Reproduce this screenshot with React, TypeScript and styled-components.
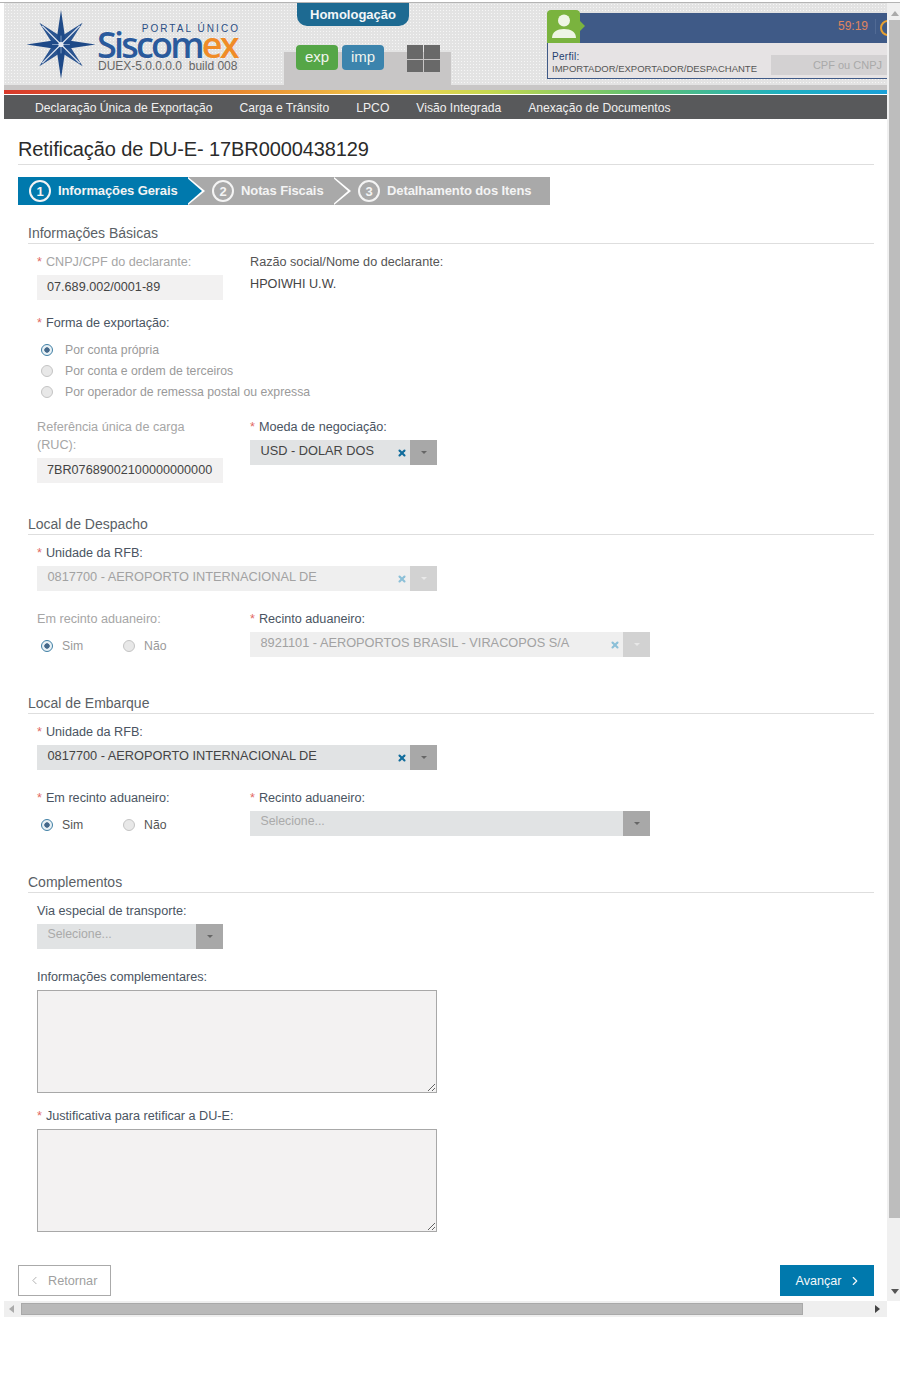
import { ChevronLeft, ChevronRight, X } from "lucide-react";
import styled, { createGlobalStyle } from "styled-components";

const GlobalStyle = createGlobalStyle`
  html, body {
    margin: 0;
    background: #fff;
    font-family: "Liberation Sans", Arial, sans-serif;
    color: #444;
  }
`;

const Star = () => (
  <StarSvg viewBox="0 0 70 70">
    <polygon points="13,13 35,27 57,13 43,35 57,57 35,43 13,57 27,35" fill="#2a5490" />
    <polygon points="35,0 39.5,30.5 70,35 39.5,39.5 35,70 30.5,39.5 0,35 30.5,30.5" fill="#1f4a88" />
    <path d="M35 35L16 16M35 35L54 16M35 35L54 54M35 35L16 54" stroke="#e4e9f2" strokeWidth="1.1" />
    <path d="M35 26V44M26 35H44" stroke="#9db2d2" strokeWidth="0.8" />
    <circle cx="35" cy="35" r="2.6" fill="#e4e9f2" />
  </StarSvg>
);

const Req = () => <Asterisk>*</Asterisk>;

type SelectProps = { value?: string; width: number; disabled?: boolean };

const Select = ({ value, width, disabled }: SelectProps) => (
  <SelectBox $width={width} $disabled={disabled}>
    <SelectValue $placeholder={!value} $disabled={disabled}>
      {value ?? "Selecione..."}
    </SelectValue>
    {value && (
      <ClearIcon $disabled={disabled}>
        <X size={10} strokeWidth={5} />
      </ClearIcon>
    )}
    <SelectArrow $disabled={disabled}>
      <Caret $disabled={disabled} />
    </SelectArrow>
  </SelectBox>
);

type RadioProps = { label: string; checked?: boolean; disabled?: boolean; inline?: boolean };

const Radio = ({ label, checked, disabled, inline }: RadioProps) => (
  <RadioItem $disabled={disabled}>
    <RadioDot $checked={checked} $inline={inline} />
    {label}
  </RadioItem>
);

const App = () => {
  return (
    <>
      <GlobalStyle />
      <Frame>
        <Viewport>
          <Main>
            <Header>
              <LogoArea>
                <Star />
                <Brand>
                  <PortalText>PORTAL ÚNICO</PortalText>
                  <BrandName>
                    Siscom<em>ex</em>
                  </BrandName>
                  <BuildText>DUEX-5.0.0.0.0&nbsp; build 008</BuildText>
                </Brand>
              </LogoArea>
              <ModuleColumn>
                <EnvTab>Homologação</EnvTab>
                <ModuleRow>
                  <ModuleButton $color="#55a647">exp</ModuleButton>
                  <ModuleButton $color="#3c84ad">imp</ModuleButton>
                  <AppsGrid>
                    <i />
                    <i />
                    <i />
                    <i />
                  </AppsGrid>
                </ModuleRow>
              </ModuleColumn>
              <Profile>
                <UserBadge>
                  <svg width="26" height="24" viewBox="0 0 26 24">
                    <circle cx="13" cy="6.5" r="6" fill="#eef5e4" />
                    <path d="M1 24c0-6 5-9 12-9s12 3 12 9z" fill="#eef5e4" />
                  </svg>
                </UserBadge>
                <ProfileBar>
                  <Timer>59:19</Timer>
                  <TimerDivider />
                  <TimerRing />
                </ProfileBar>
                <ProfileBody>
                  <ProfileInfo>
                    <ProfileLabel>Perfil:</ProfileLabel>
                    <ProfileValue>IMPORTADOR/EXPORTADOR/DESPACHANTE</ProfileValue>
                  </ProfileInfo>
                  <CpfBox>CPF ou CNPJ</CpfBox>
                </ProfileBody>
              </Profile>
            </Header>
            <GrayBand />
            <ColorStrip />
            <Nav>
              <span>Declaração Única de Exportação</span>
              <span>Carga e Trânsito</span>
              <span>LPCO</span>
              <span>Visão Integrada</span>
              <span>Anexação de Documentos</span>
            </Nav>

            <Content>
              <PageTitle>Retificação de DU-E- 17BR0000438129</PageTitle>
              <Steps>
                <Step $active $width={170} $z={3}>
                  <StepNumber>1</StepNumber>Informações Gerais
                </Step>
                <Step $width={146} $z={2} $pad={24}>
                  <StepNumber>2</StepNumber>Notas Fiscais
                </Step>
                <Step $width={216} $z={1} $pad={24} $last>
                  <StepNumber>3</StepNumber>Detalhamento dos Itens
                </Step>
              </Steps>

              <SectionTitle $top={18}>Informações Básicas</SectionTitle>
              <Fields>
                <Row $top={8}>
                  <Col>
                    <Label $muted>
                      <Req />
                      CNPJ/CPF do declarante:
                    </Label>
                    <ReadOnlyInput>07.689.002/0001-89</ReadOnlyInput>
                  </Col>
                  <Col>
                    <Label $tone="soft">Razão social/Nome do declarante:</Label>
                    <StaticValue>HPOIWHI U.W.</StaticValue>
                  </Col>
                </Row>
                <Label $top={13}>
                  <Req />
                  Forma de exportação:
                </Label>
                <RadioStack>
                  <Radio label="Por conta própria" checked disabled />
                  <Radio label="Por conta e ordem de terceiros" disabled />
                  <Radio label="Por operador de remessa postal ou expressa" disabled />
                </RadioStack>
                <Row $top={15}>
                  <Col>
                    <Label $muted>
                      Referência única de carga
                      <br />
                      (RUC):
                    </Label>
                    <ReadOnlyInput $top={8}>7BR07689002100000000000</ReadOnlyInput>
                  </Col>
                  <Col>
                    <Label>
                      <Req />
                      Moeda de negociação:
                    </Label>
                    <Select value="USD - DOLAR DOS" width={187} />
                  </Col>
                </Row>
              </Fields>

              <SectionTitle $top={31}>Local de Despacho</SectionTitle>
              <Fields>
                <Label $top={8}>
                  <Req />
                  Unidade da RFB:
                </Label>
                <Select value="0817700 - AEROPORTO INTERNACIONAL DE" width={400} disabled />
                <Row $top={18}>
                  <Col>
                    <Label $muted>Em recinto aduaneiro:</Label>
                    <RadioRow>
                      <Radio label="Sim" checked disabled inline />
                      <Radio label="Não" disabled inline />
                    </RadioRow>
                  </Col>
                  <Col>
                    <Label>
                      <Req />
                      Recinto aduaneiro:
                    </Label>
                    <Select value="8921101 - AEROPORTOS BRASIL - VIRACOPOS S/A" width={400} disabled />
                  </Col>
                </Row>
              </Fields>

              <SectionTitle $top={36}>Local de Embarque</SectionTitle>
              <Fields>
                <Label $top={8}>
                  <Req />
                  Unidade da RFB:
                </Label>
                <Select value="0817700 - AEROPORTO INTERNACIONAL DE" width={400} />
                <Row $top={18}>
                  <Col>
                    <Label>
                      <Req />
                      Em recinto aduaneiro:
                    </Label>
                    <RadioRow>
                      <Radio label="Sim" checked inline />
                      <Radio label="Não" inline />
                    </RadioRow>
                  </Col>
                  <Col>
                    <Label>
                      <Req />
                      Recinto aduaneiro:
                    </Label>
                    <Select width={400} />
                  </Col>
                </Row>
              </Fields>

              <SectionTitle $top={36}>Complementos</SectionTitle>
              <Fields>
                <Label $top={8}>Via especial de transporte:</Label>
                <Select width={186} />
                <Label $top={18}>Informações complementares:</Label>
                <TextArea readOnly />
                <Label $top={13}>
                  <Req />
                  Justificativa para retificar a DU-E:
                </Label>
                <TextArea readOnly />
              </Fields>

              <Footer>
                <BackButton>
                  <ChevronLeft size={13} strokeWidth={1.5} />
                  Retornar
                </BackButton>
                <NextButton>
                  Avançar
                  <ChevronRight size={14} strokeWidth={2} />
                </NextButton>
              </Footer>
            </Content>
          </Main>
          <VScroll>
            <VThumb />
            <VArrowDown />
          </VScroll>
        </Viewport>
        <HScroll>
          <HArrow $dir="left" />
          <HThumb />
          <HArrow $dir="right" />
        </HScroll>
      </Frame>
    </>
  );
};
export default App;

const Frame = styled.div`
  width: 896px;
  padding: 2px 0 0 4px;
  height: 1398px;
  box-sizing: content-box;
`;

const Viewport = styled.div`
  display: flex;
  border-top: 1px solid #b4b4b4;
  margin-left: -4px;
  padding-left: 4px;
`;

const Main = styled.div`
  width: 883px;
  flex: none;
`;

const Header = styled.div`
  height: 82px;
  display: flex;
  background-color: #e3e3e3;
  background-image: radial-gradient(#f6f6f6 0.8px, transparent 0.9px);
  background-size: 3px 3px;
`;

const LogoArea = styled.div`
  width: 280px;
  flex: none;
  display: flex;
  align-items: flex-start;
  padding: 7px 0 0 22px;
  box-sizing: border-box;
`;

const StarSvg = styled.svg`
  width: 70px;
  height: 69px;
  flex: none;
`;

const Brand = styled.div`
  margin: 13px 0 0 1px;
  width: 146px;
`;

const PortalText = styled.div`
  font-size: 10px;
  line-height: 11px;
  letter-spacing: 2.05px;
  color: #2b4f85;
  text-align: right;
  padding-right: 3px;
  white-space: nowrap;
`;

const BrandName = styled.div`
  margin-top: -3px;
  font-family: "Open Sans", sans-serif;
  font-size: 36px;
  font-weight: 600;
  line-height: 28px;
  letter-spacing: -2.8px;
  color: #2a5a9c;
  em {
    font-style: normal;
    color: #f08c28;
  }
`;

const BuildText = styled.div`
  font-size: 12px;
  line-height: 14px;
  color: #666;
  padding-left: 1px;
  white-space: nowrap;
`;

const ModuleColumn = styled.div`
  width: 167px;
  flex: none;
  padding-left: 13px;
  box-sizing: border-box;
  background: linear-gradient(#c8c6c6, #c8c6c6) bottom / 100% 33px no-repeat;
`;

const EnvTab = styled.div`
  width: 112px;
  height: 23px;
  background: #1d6a92;
  border-radius: 0 0 10px 10px;
  color: #f2f6f8;
  font-size: 13px;
  font-weight: bold;
  line-height: 24px;
  text-align: center;
`;

const ModuleRow = styled.div`
  display: flex;
  align-items: flex-start;
  gap: 4px;
  margin: 19px 0 0 -1px;
`;

const ModuleButton = styled.div<{ $color: string }>`
  width: 42px;
  height: 25px;
  border-radius: 4px;
  background: ${(p) => p.$color};
  color: #f0f4ee;
  font-size: 15px;
  line-height: 24px;
  text-align: center;
`;

const AppsGrid = styled.div`
  display: grid;
  grid-template-columns: 16px 16px;
  grid-template-rows: 14px 12px;
  gap: 1px;
  margin-left: 19px;
  i {
    background: #696969;
  }
`;

const Profile = styled.div`
  position: relative;
  margin: 10px 0 0 96px;
  width: 340px;
  flex: none;
`;

const UserBadge = styled.div`
  position: absolute;
  left: 0;
  top: -3px;
  width: 33px;
  height: 33px;
  background: #7ab33e;
  border-radius: 4px 4px 0 0;
  display: flex;
  align-items: flex-end;
  justify-content: center;
  padding-bottom: 5px;
  box-sizing: border-box;
  z-index: 1;
  &::after {
    content: "";
    position: absolute;
    right: -5px;
    top: 11px;
    border-left: 5px solid #7ab33e;
    border-top: 5px solid transparent;
    border-bottom: 5px solid transparent;
  }
`;

const ProfileBar = styled.div`
  height: 30px;
  background: #3f5a87;
  display: flex;
  align-items: center;
  justify-content: flex-end;
  overflow: hidden;
  position: relative;
`;

const Timer = styled.span`
  font-size: 12px;
  color: #e0855e;
  position: absolute;
  left: 291px;
  top: 6px;
`;

const TimerDivider = styled.span`
  position: absolute;
  left: 328px;
  top: 6px;
  width: 1px;
  height: 15px;
  background: #516a94;
`;

const TimerRing = styled.span`
  position: absolute;
  left: 333px;
  top: 7px;
  width: 12px;
  height: 12px;
  border: 2px solid #e8a030;
  border-radius: 50%;
`;

const ProfileBody = styled.div`
  height: 36px;
  background: #e6e3e4;
  border-left: 1px solid #3f5a87;
  border-bottom: 1px solid #3f5a87;
  display: flex;
  align-items: flex-end;
  justify-content: space-between;
  padding: 0 0 3px 4px;
  box-sizing: border-box;
`;

const ProfileInfo = styled.div`
  line-height: 12px;
`;

const ProfileLabel = styled.div`
  font-size: 10px;
  color: #24406e;
  letter-spacing: 0.3px;
`;

const ProfileValue = styled.div`
  font-size: 9.5px;
  color: #555;
  white-space: nowrap;
`;

const CpfBox = styled.div`
  width: 116px;
  height: 20px;
  background: #d3d1d2;
  color: #a9a9a9;
  font-size: 11px;
  line-height: 20px;
  text-align: right;
  padding-right: 5px;
  box-sizing: border-box;
`;

const GrayBand = styled.div`
  height: 5px;
  background: #c8c6c6;
`;

const ColorStrip = styled.div`
  height: 4px;
  border-bottom: 1px solid #fff;
  box-sizing: content-box;
  background: linear-gradient(
    90deg,
    #d8392b 0%,
    #e8822b 25%,
    #f0d050 45%,
    #c5d850 55%,
    #60c070 72%,
    #20b0c0 88%,
    #1aa0d8 100%
  );
  background-clip: padding-box;
`;

const Nav = styled.nav`
  height: 24px;
  background: #58595b;
  color: #f0f0f0;
  font-size: 12.15px;
  line-height: 26px;
  display: flex;
  gap: 27px;
  padding-left: 31px;
`;

const Content = styled.main`
  width: 856px;
  margin-left: 14px;
  height: 1182px;
`;

const PageTitle = styled.h1`
  margin: 0;
  padding: 19px 0 4px;
  font-size: 20px;
  font-weight: normal;
  line-height: 22px;
  letter-spacing: -0.11px;
  color: #2b2b2b;
  border-bottom: 1px solid #dedede;
`;

const Steps = styled.div`
  display: flex;
  margin-top: 12px;
  height: 28px;
`;

const Step = styled.div<{ $active?: boolean; $width: number; $z: number; $pad?: number; $last?: boolean }>`
  position: relative;
  z-index: ${(p) => p.$z};
  width: ${(p) => p.$width}px;
  flex: none;
  box-sizing: border-box;
  display: flex;
  align-items: center;
  padding: 0 0 2px ${(p) => p.$pad ?? 11}px;
  background: ${(p) => (p.$active ? "#0079ad" : "#a9a9a9")};
  color: #f4f4f4;
  font-size: 13px;
  font-weight: bold;
  letter-spacing: -0.1px;
  white-space: nowrap;
  &::before,
  &::after {
    content: ${(p) => (p.$last ? "none" : '""')};
    position: absolute;
    top: 0;
    height: 28px;
    clip-path: polygon(0 0, 100% 50%, 0 100%);
  }
  &::before {
    left: 0;
    margin-left: ${(p) => p.$width}px;
    width: 17px;
    background: #fff;
  }
  &::after {
    left: 0;
    margin-left: ${(p) => p.$width - 2}px;
    width: 16px;
    background: ${(p) => (p.$active ? "#0079ad" : "#a9a9a9")};
  }
`;

const StepNumber = styled.span`
  width: 22px;
  height: 22px;
  margin: 2px 7px 0 0;
  border: 2px solid #f4f4f4;
  border-radius: 50%;
  box-sizing: border-box;
  display: flex;
  align-items: center;
  justify-content: center;
  font-size: 13px;
`;

const SectionTitle = styled.h2<{ $top: number }>`
  margin: ${(p) => p.$top}px 0 0 10px;
  font-size: 14px;
  font-weight: normal;
  line-height: 20px;
  color: #5a5f66;
  border-bottom: 1px solid #dedede;
`;

const Fields = styled.div`
  padding-left: 19px;
`;

const Row = styled.div<{ $top: number }>`
  display: flex;
  gap: 27px;
  margin-top: ${(p) => p.$top}px;
`;

const Col = styled.div`
  width: 186px;
  flex: none;
`;

const Label = styled.div<{ $top?: number; $muted?: boolean; $tone?: string }>`
  margin-top: ${(p) => p.$top ?? 0}px;
  margin-bottom: 4px;
  padding-top: 1px;
  font-size: 12.65px;
  line-height: 18px;
  white-space: nowrap;
  color: ${(p) => (p.$muted ? "#a6a6a6" : p.$tone === "soft" ? "#555" : "#4a5462")};
`;

const Asterisk = styled.span`
  color: #e2685f;
  margin-right: 4px;
`;

const ReadOnlyInput = styled.div<{ $top?: number }>`
  width: 186px;
  height: 25px;
  margin-top: ${(p) => (p.$top ? p.$top - 5 : 0)}px;
  background: #f2f1f1;
  color: #444;
  font-size: 12.65px;
  line-height: 25px;
  padding-left: 10px;
  box-sizing: border-box;
  white-space: nowrap;
`;

const StaticValue = styled.div`
  font-size: 12.65px;
  line-height: 18px;
  color: #444;
`;

const RadioStack = styled.div`
  margin-top: 7px;
  display: flex;
  flex-direction: column;
`;

const RadioRow = styled.div`
  display: flex;
  gap: 36px;
  margin-top: 7px;
`;

const RadioItem = styled.label<{ $disabled?: boolean }>`
  display: flex;
  align-items: center;
  height: 21px;
  padding-left: 4px;
  font-size: 12.25px;
  color: ${(p) => (p.$disabled ? "#9a9a9a" : "#555")};
`;

const RadioDot = styled.span<{ $checked?: boolean; $inline?: boolean }>`
  width: 12px;
  height: 12px;
  flex: none;
  margin-right: ${(p) => (p.$inline ? 9 : 12)}px;
  border-radius: 50%;
  box-sizing: border-box;
  border: 1px solid ${(p) => (p.$checked ? "#3f7fa5" : "#c4c4c4")};
  background: ${(p) =>
    p.$checked ? "radial-gradient(circle, #44688a 2.4px, #e9f1f5 3px)" : "#e8e8e8"};
`;

const SelectBox = styled.div<{ $width: number; $disabled?: boolean }>`
  width: ${(p) => p.$width}px;
  height: 25px;
  display: flex;
  align-items: stretch;
  background: ${(p) => (p.$disabled ? "#efefef" : "#e1e3e4")};
`;

const SelectValue = styled.div<{ $placeholder?: boolean; $disabled?: boolean }>`
  flex: 1;
  min-width: 0;
  padding-left: 10.5px;
  font-size: ${(p) => (p.$placeholder ? 12.3 : 12.77)}px;
  line-height: 21px;
  white-space: nowrap;
  overflow: hidden;
  color: ${(p) => (p.$placeholder ? "#aaa" : p.$disabled ? "#a2a2a2" : "#444")};
`;

const ClearIcon = styled.span<{ $disabled?: boolean }>`
  display: flex;
  align-items: center;
  width: 13px;
  flex: none;
  color: ${(p) => (p.$disabled ? "#8cc0d8" : "#126d9c")};
`;

const SelectArrow = styled.div<{ $disabled?: boolean }>`
  width: 27px;
  flex: none;
  display: flex;
  align-items: center;
  justify-content: center;
  background: ${(p) => (p.$disabled ? "#d2d2d2" : "#a8a8a8")};
`;

const Caret = styled.span<{ $disabled?: boolean }>`
  border-top: 3px solid ${(p) => (p.$disabled ? "#e8e8e8" : "#666")};
  border-left: 3px solid transparent;
  border-right: 3px solid transparent;
`;

const TextArea = styled.textarea`
  display: block;
  width: 400px;
  height: 103px;
  margin: 0;
  padding: 4px;
  box-sizing: border-box;
  background: #f3f2f2;
  border: 1px solid #a8a8a8;
  outline: none;
`;

const Footer = styled.div`
  display: flex;
  justify-content: space-between;
  margin-top: 33px;
`;

const BackButton = styled.div`
  width: 93px;
  height: 31px;
  border: 1px solid #aaa;
  box-sizing: border-box;
  color: #9f9f9f;
  font-size: 12.7px;
  display: flex;
  align-items: center;
  padding-left: 9px;
  gap: 7px;
`;

const NextButton = styled.div`
  width: 94px;
  height: 31px;
  padding-left: 4px;
  box-sizing: border-box;
  background: #0079ad;
  color: #f4f8fa;
  font-size: 12.6px;
  display: flex;
  align-items: center;
  justify-content: center;
  gap: 7px;
`;

const VScroll = styled.div`
  width: 13px;
  flex: none;
  position: relative;
  background: #f0f0f0;
  padding: 17px 0 0 2px;
  box-sizing: border-box;
  &::before {
    content: "";
    position: absolute;
    left: 4px;
    top: 8px;
    border-bottom: 5px solid #aaa;
    border-left: 4px solid transparent;
    border-right: 4px solid transparent;
  }
`;

const VThumb = styled.div`
  height: 1198px;
  background: #bdbdbd;
`;

const VArrowDown = styled.span`
  position: absolute;
  left: 4px;
  bottom: 7px;
  border-top: 5px solid #555;
  border-left: 4px solid transparent;
  border-right: 4px solid transparent;
`;

const HScroll = styled.div`
  width: 883px;
  height: 16px;
  background: #efefef;
  display: flex;
  align-items: center;
  padding: 0 7px 0 5px;
  box-sizing: border-box;
`;

const HThumb = styled.div`
  width: 782px;
  height: 12px;
  margin-left: 7px;
  background: #b9b9b9;
  border: 1px solid #a9a9a9;
  box-sizing: border-box;
`;

const HArrow = styled.span<{ $dir: "left" | "right" }>`
  flex: none;
  border-top: 4px solid transparent;
  border-bottom: 4px solid transparent;
  ${(p) =>
    p.$dir === "left"
      ? "border-right: 5px solid #aaa;"
      : "border-left: 5px solid #444; margin-left: auto;"}
`;
